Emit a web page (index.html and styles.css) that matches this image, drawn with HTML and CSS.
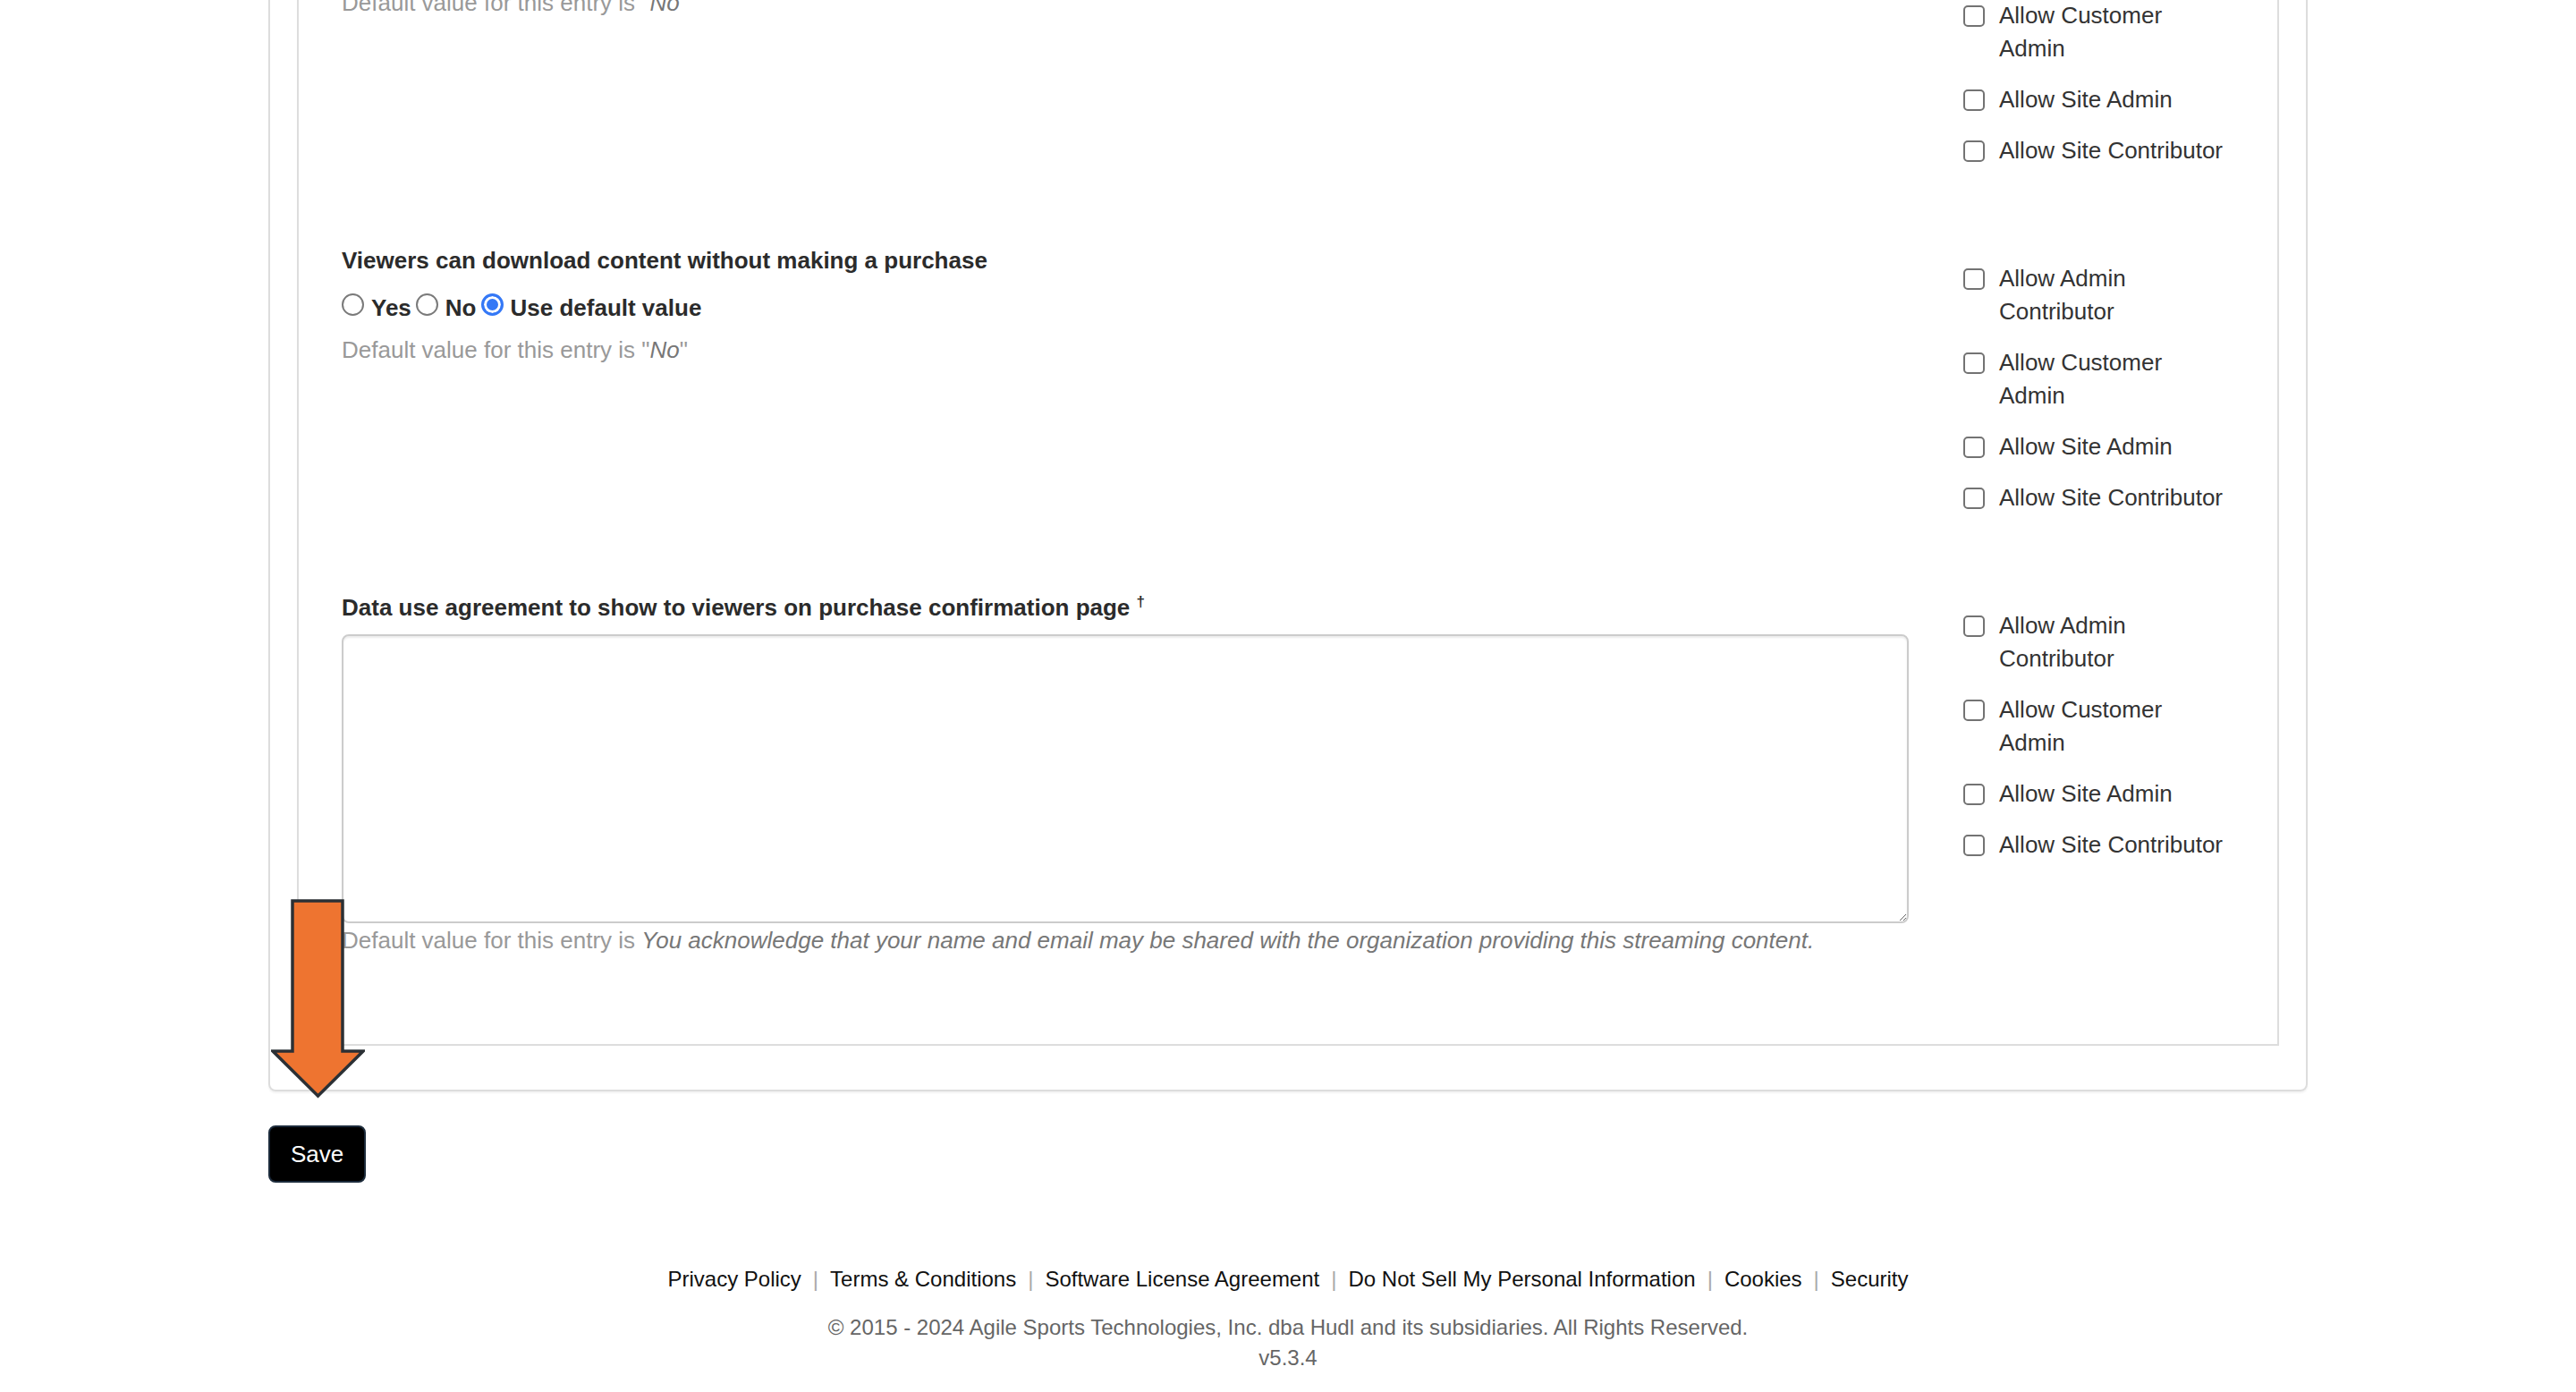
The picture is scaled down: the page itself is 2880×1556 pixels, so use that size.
FILE: index.html
```html
<!DOCTYPE html>
<html lang="en">
<head>
	<meta charset="UTF-8">
	<title>Broadcast Settings</title>
	<link rel="stylesheet" href="styles.css">
</head>
<body>
	<div class="page">
		<div class="panel">
			<div class="panel-body">

				<div class="setting">
					<div class="setting-main">
						<div class="setting-label">Viewers can share content without making a purchase</div>
						<div class="radios">
							<label><input type="radio" name="share"/>Yes</label>
							<label><input type="radio" name="share"/>No</label>
							<label><input type="radio" name="share" checked/>Use default value</label>
						</div>
						<p class="help">Default value for this entry is "<em>No</em>"</p>
					</div>
					<ul class="roles">
						<li><label><input type="checkbox"/><span>Allow Admin Contributor</span></label></li>
						<li><label><input type="checkbox"/><span>Allow Customer Admin</span></label></li>
						<li><label><input type="checkbox"/><span>Allow Site Admin</span></label></li>
						<li><label><input type="checkbox"/><span>Allow Site Contributor</span></label></li>
					</ul>
				</div>

				<div class="setting">
					<div class="setting-main">
						<div class="setting-label">Viewers can download content without making a purchase</div>
						<div class="radios">
							<label><input type="radio" name="download"/>Yes</label>
							<label><input type="radio" name="download"/>No</label>
							<label><input type="radio" name="download" checked/>Use default value</label>
						</div>
						<p class="help">Default value for this entry is "<em>No</em>"</p>
					</div>
					<ul class="roles">
						<li><label><input type="checkbox"/><span>Allow Admin Contributor</span></label></li>
						<li><label><input type="checkbox"/><span>Allow Customer Admin</span></label></li>
						<li><label><input type="checkbox"/><span>Allow Site Admin</span></label></li>
						<li><label><input type="checkbox"/><span>Allow Site Contributor</span></label></li>
					</ul>
				</div>

				<div class="setting">
					<div class="setting-main">
						<div class="setting-label">Data use agreement to show to viewers on purchase confirmation page <sup>†</sup></div>
						<textarea class="textarea"></textarea>
						<p class="help help-under">Default value for this entry is <em>You acknowledge that your name and email may be shared with the organization providing this streaming content.</em></p>
					</div>
					<ul class="roles">
						<li><label><input type="checkbox"/><span>Allow Admin Contributor</span></label></li>
						<li><label><input type="checkbox"/><span>Allow Customer Admin</span></label></li>
						<li><label><input type="checkbox"/><span>Allow Site Admin</span></label></li>
						<li><label><input type="checkbox"/><span>Allow Site Contributor</span></label></li>
					</ul>
				</div>

			</div>
			<svg class="arrow" viewBox="0 0 105 223" width="105" height="223">
				<polygon points="24,2 80,2 80,170 103,170 52.5,220 2,170 24,170" fill="#ee7430" stroke="#2b3035" stroke-width="3.5" stroke-linejoin="miter"/>
			</svg>
		</div>

		<button class="btn-save" type="button">Save</button>

		<div class="footer">
			<div class="footer-links">
				<a href="javascript:;">Privacy Policy</a><span class="sep">|</span><a href="javascript:;">Terms &amp; Conditions</a><span class="sep">|</span><a href="javascript:;">Software License Agreement</a><span class="sep">|</span><a href="javascript:;">Do Not Sell My Personal Information</a><span class="sep">|</span><a href="javascript:;">Cookies</a><span class="sep">|</span><a href="javascript:;">Security</a>
			</div>
			<div class="copyright">© 2015 - 2024 Agile Sports Technologies, Inc. dba Hudl and its subsidiaries. All Rights Reserved.</div>
			<div class="version">v5.3.4</div>
		</div>
	</div>
</body>
</html>
```

FILE: styles.css
```css
body{margin: 0;font-family: "Helvetica Neue", Helvetica, "Liberation Sans", Arial, sans-serif;font-size: 26px;line-height: 37px;color: #333;background: #fff;}
p,ul{margin: 0;padding: 0;}
li{list-style: none;}

.page{width: 2280px;margin: -189px auto 0;}

.panel{position: relative;border: 2px solid #ddd;border-radius: 8px;box-shadow: 0 2px 2px rgba(0,0,0,.05);padding: 30px 30px 49px;}
.panel-body{border: 2px solid #ddd;padding: 40px 55px 97px 48px;}

.setting{display: grid;grid-template-columns: 1752px 296px;column-gap: 61px;}
.setting + .setting{margin-top: 86px;}
.setting-label{font-weight: bold;color: #2b2b2b;margin-bottom: 11px;}
.setting-label sup{font-size: 17px;line-height: 0;}

.radios{display: flex;margin-top: 16px;font-weight: bold;color: #2b2b2b;}
.radios label{display: flex;align-items: flex-start;margin-right: 5px;}
.radios input{appearance: none;-webkit-appearance: none;box-sizing: border-box;width: 25px;height: 25px;margin: 2px 8px 0 0;border: 2px solid #7a7a7a;border-radius: 50%;background: #fff;}
.radios input:checked{border: 3px solid #3478f6;background: #3478f6;box-shadow: inset 0 0 0 3px #fff;}

.help{margin-top: 10px;color: #999;}
.help em{color: #777;}
.help-under{margin-top: 1px;}

.textarea{display: block;box-sizing: border-box;width: 100%;height: 323px;margin: 0;border: 2px solid #ccc;border-radius: 8px;box-shadow: inset 0 2px 2px rgba(0,0,0,.075);font: inherit;}

.roles{margin-top: 20px;display: flex;flex-direction: column;gap: 20px;}
.roles label{display: flex;align-items: flex-start;}
.roles input{appearance: none;-webkit-appearance: none;box-sizing: border-box;flex-shrink: 0;width: 24px;height: 24px;margin: 7px 16px 0 0;border: 2px solid #737373;border-radius: 5px;background: #fff;}

.arrow{position: absolute;left: 1px;bottom: -10px;}

.btn-save{display: block;margin-top: 38px;height: 64px;padding: 0 23px;background: #000;color: #fff;border: 2px solid #1c2b3b;border-radius: 8px;font-family: inherit;font-size: 26px;}

.footer{margin-top: 91px;text-align: center;font-size: 24px;line-height: 34px;}
.footer-links a{color: #111;text-decoration: none;}
.footer-links .sep{color: #aaa;margin: 0 13px;}
.copyright{margin-top: 20px;color: #666;}
.version{color: #666;}
```
